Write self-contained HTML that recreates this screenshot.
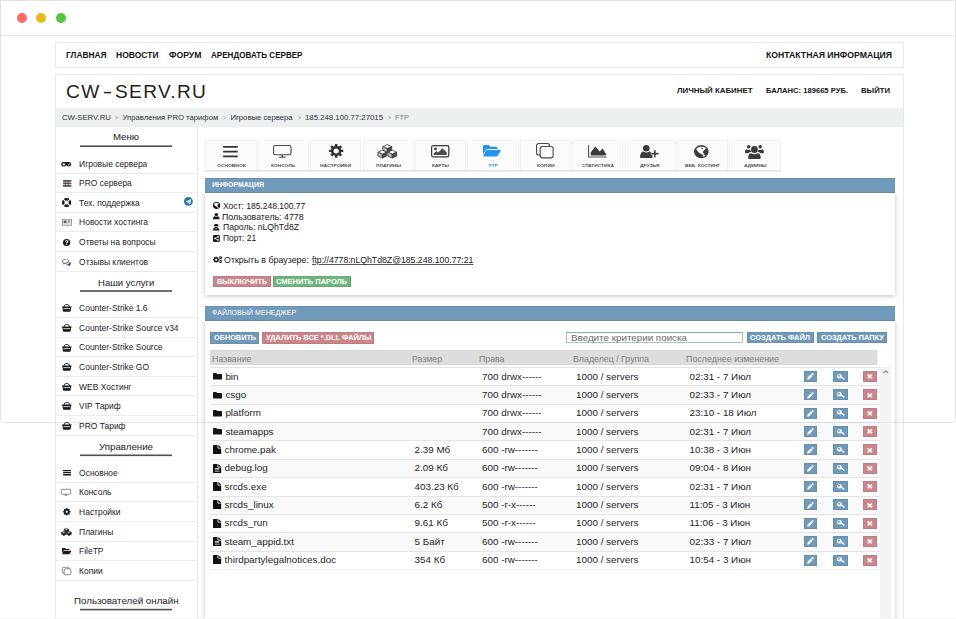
<!DOCTYPE html>
<html lang="ru">
<head>
<meta charset="utf-8">
<title>CW-SERV.RU — FTP</title>
<style>
*{box-sizing:border-box;margin:0;padding:0}
html,body{width:956px;height:619px;overflow:hidden;background:#fff}
body{position:relative;font-family:"Liberation Sans",sans-serif;color:#222}
.t{position:absolute;white-space:pre;transform-origin:0 0;display:block}
.r{position:absolute}
.ic{position:absolute;display:block;overflow:visible}
a.t{text-decoration:underline}
</style>
</head>
<body>
<div class="r" style="left:0.00px;top:0.00px;width:956.00px;height:423.00px;background:#fff;border:1px solid #e3e3e3;border-radius:0 0 3.5px 3.5px;"></div>
<div class="r" style="left:1.00px;top:35.00px;width:954.00px;height:1.00px;background:#e4e4e4;"></div>
<div class="r" style="left:17.00px;top:13.00px;width:10.00px;height:10.00px;background:#ff6b6b;border-radius:50%;"></div>
<div class="r" style="left:36.00px;top:13.00px;width:10.00px;height:10.00px;background:#ebb81c;border-radius:50%;"></div>
<div class="r" style="left:56.00px;top:13.00px;width:10.00px;height:10.00px;background:#55c63f;border-radius:50%;"></div>
<div class="r" style="left:55.00px;top:36.00px;width:849.00px;height:583.00px;background:#fff;"></div>
<nav>
<div class="r" style="left:55.00px;top:42.00px;width:849.00px;height:26.00px;background:#fff;border:1px solid #e9e9e9;"></div>
<span class="t" style="left:66.00px;top:49.80px;font-size:8.3px;line-height:10px;color:#141414;font-weight:bold;transform:scaleX(1.0062);">ГЛАВНАЯ</span>
<span class="t" style="left:116.00px;top:49.80px;font-size:8.3px;line-height:10px;color:#141414;font-weight:bold;transform:scaleX(1.0237);">НОВОСТИ</span>
<span class="t" style="left:168.50px;top:49.80px;font-size:8.3px;line-height:10px;color:#141414;font-weight:bold;transform:scaleX(1.0468);">ФОРУМ</span>
<span class="t" style="left:210.50px;top:49.80px;font-size:8.3px;line-height:10px;color:#141414;font-weight:bold;transform:scaleX(0.9731);">АРЕНДОВАТЬ СЕРВЕР</span>
<span class="t" style="left:765.50px;top:49.80px;font-size:8.3px;line-height:10px;color:#141414;font-weight:bold;transform:scaleX(1.0461);">КОНТАКТНАЯ ИНФОРМАЦИЯ</span>
</nav>
<header>
<div class="r" style="left:55.00px;top:74.00px;width:849.00px;height:560.00px;background:#fff;border:1px solid #e9e9e9;"></div>
<div class="t" id="logo" style="left:66.3px;top:81.2px;font-size:18px;line-height:22px;color:#222;letter-spacing:1.25px;transform:scaleX(1.062)">CW<span style="display:inline-block;font-size:15px;letter-spacing:0;transform:translateY(-1.1px) scaleX(.9);margin:0 2.9px 0 2.4px;font-weight:bold">–</span>SERV.RU</div>
<span class="t" style="left:676.50px;top:86.30px;font-size:7.4px;line-height:9px;color:#141414;font-weight:bold;transform:scaleX(1.0650);">ЛИЧНЫЙ КАБИНЕТ</span>
<span class="t" style="left:765.50px;top:86.30px;font-size:7.4px;line-height:9px;color:#141414;font-weight:bold;transform:scaleX(1.0290);">БАЛАНС: 189665 РУБ.</span>
<span class="t" style="left:861.00px;top:86.30px;font-size:7.4px;line-height:9px;color:#141414;font-weight:bold;transform:scaleX(1.0462);">ВЫЙТИ</span>
<div class="r" style="left:56.00px;top:108.00px;width:847.00px;height:19.00px;background:#ecf0f1;"></div>
<span class="t" style="left:62.00px;top:113.10px;font-size:7.7px;line-height:9px;color:#2c3034;transform:scaleX(1.0049);">CW-SERV.RU</span>
<span class="t" style="left:115.00px;top:113.60px;font-size:6.5px;line-height:8px;color:#8a8f94;transform:scaleX(0.7901);">&gt;</span>
<span class="t" style="left:122.50px;top:113.10px;font-size:7.7px;line-height:9px;color:#2c3034;">Управления PRO тарифом</span>
<span class="t" style="left:223.00px;top:113.60px;font-size:6.5px;line-height:8px;color:#8a8f94;transform:scaleX(0.7901);">&gt;</span>
<span class="t" style="left:230.50px;top:113.10px;font-size:7.7px;line-height:9px;color:#2c3034;">Игровые сервера</span>
<span class="t" style="left:298.00px;top:113.60px;font-size:6.5px;line-height:8px;color:#8a8f94;transform:scaleX(0.7901);">&gt;</span>
<span class="t" style="left:304.50px;top:113.10px;font-size:7.7px;line-height:9px;color:#2c3034;transform:scaleX(1.0136);">185.248.100.77:27015</span>
<span class="t" style="left:388.00px;top:113.60px;font-size:6.5px;line-height:8px;color:#8a8f94;transform:scaleX(0.7901);">&gt;</span>
<span class="t" style="left:394.50px;top:113.10px;font-size:7.7px;line-height:9px;color:#7b8085;transform:scaleX(0.9634);">FTP</span>
</header>
<aside>
<div class="r" style="left:197.00px;top:127.00px;width:1.00px;height:492.00px;background:#e6e9ec;"></div>
<span class="t" style="left:113.00px;top:132.40px;font-size:9.2px;line-height:11px;color:#222;transform:scaleX(1.0465);">Меню</span>
<div class="r" style="left:80.00px;top:145.00px;width:92.30px;height:2.00px;background:linear-gradient(rgba(78,78,78,0.60) 0.00% 50.00%,rgba(78,78,78,1.00) 50.00% 100.00%);"></div>
<svg class="ic" style="left:61.20px;top:161.80px;width:10.40px;height:4.60px;color:#1a1a1a;" viewBox="0 0 16 8" preserveAspectRatio="none" fill="currentColor"><path fill-rule="evenodd" d="M4.300 0h7.400a4 4 0 0 1 0 8c-1.400 0-2.600-.7-3.300-1.700h-.800A4 4 0 0 1 4.300 8a4 4 0 0 1 0-8zM4.300 2a2 2 0 1 0 0 4 2 2 0 0 0 0-4z"/><path fill="#fff" d="M10.300 5.700l2.900-3.600.9.700-2.900 3.600z" opacity=".9"/></svg>
<span class="t" style="left:79.10px;top:158.80px;font-size:8.45px;line-height:10px;color:#25232b;">Игровые сервера</span>
<div class="r" style="left:56.00px;top:172.80px;width:141.00px;height:1.00px;background:#e8ecef;"></div>
<svg class="ic" style="left:62.70px;top:180.14px;width:8.40px;height:6.80px;color:#33303a;" viewBox="0 0 14 12" preserveAspectRatio="none" fill="currentColor"><path d="M0 0h14v3.200H0zM0 4.400h14v3.200H0zM0 8.800h14V12H0z" opacity=".8"/><path d="M3.400 0h1.300v12H3.400zM8 0h1.300v12H8z" opacity=".75"/></svg>
<span class="t" style="left:79.10px;top:178.34px;font-size:8.45px;line-height:10px;color:#25232b;">PRO сервера</span>
<div class="r" style="left:56.00px;top:192.34px;width:141.00px;height:1.00px;background:#e8ecef;"></div>
<svg class="ic" style="left:62.00px;top:198.48px;width:9.20px;height:9.00px;color:#1a1a1a;" viewBox="0 0 14 14" preserveAspectRatio="none" fill="currentColor"><path fill-rule="evenodd" d="M7 0a7 7 0 1 1 0 14A7 7 0 0 1 7 0zm0 3.700a3.300 3.300 0 1 0 0 6.600 3.300 3.300 0 0 0 0-6.600z"/><path fill="#fff" d="M2.300 1.100l3 3-1.200 1.200-3-3zM11.700 1.100l1.200 1.200-3 3-1.200-1.200zM4.100 8.700l1.200 1.200-3 3-1.200-1.200zM9.900 8.700l3 3-1.200 1.200-3-3z"/></svg>
<span class="t" style="left:79.10px;top:197.88px;font-size:8.45px;line-height:10px;color:#25232b;">Тех. поддержка</span>
<div class="r" style="left:56.00px;top:211.88px;width:141.00px;height:1.00px;background:#e8ecef;"></div>
<svg class="ic" style="left:61.95px;top:219.22px;width:9.90px;height:6.80px;color:#1a1a1a;" viewBox="0 0 16 11" preserveAspectRatio="none" fill="currentColor"><path fill-rule="evenodd" d="M0 0h16v9.500A1.500 1.500 0 0 1 14.500 11h-13A1.500 1.500 0 0 1 0 9.500zm1 1v8.500a.5.500 0 0 0 .5.500h13a.5.500 0 0 0 .5-.5V1z" opacity=".7"/><path d="M2.500 2.500h5v4h-5zM9 2.500h4.500v1H9zM9 4.500h4.500v1H9zM2.500 7.500h11v1h-11z" opacity=".7"/></svg>
<span class="t" style="left:79.10px;top:217.42px;font-size:8.45px;line-height:10px;color:#25232b;">Новости хостинга</span>
<div class="r" style="left:56.00px;top:231.42px;width:141.00px;height:1.00px;background:#e8ecef;"></div>
<svg class="ic" style="left:63.40px;top:238.66px;width:7.20px;height:7.00px;color:#1a1a1a;" viewBox="0 0 14 14" preserveAspectRatio="none" fill="currentColor"><path fill-rule="evenodd" d="M7 0a7 7 0 1 1 0 14A7 7 0 0 1 7 0zM5.900 9.800v1.900h2.100V9.800zM7.100 2.300c-1.700 0-2.800.8-3.300 2.200l1.700.9c.3-.7.700-1.200 1.500-1.200.7 0 1.100.4 1.100.9 0 .6-.4.900-1 1.400-.8.600-1.200 1.200-1.200 2.300h2c0-.7.300-1 1-1.500.8-.6 1.400-1.300 1.400-2.400 0-1.600-1.300-2.600-3.200-2.600z"/></svg>
<span class="t" style="left:79.10px;top:236.96px;font-size:8.45px;line-height:10px;color:#25232b;">Ответы на вопросы</span>
<div class="r" style="left:56.00px;top:250.96px;width:141.00px;height:1.00px;background:#e8ecef;"></div>
<svg class="ic" style="left:62.40px;top:258.50px;width:9.00px;height:6.80px;color:#222;" viewBox="0 0 16 13" preserveAspectRatio="none" fill="currentColor"><path fill-rule="evenodd" d="M6.200 0c3.400 0 6.200 2 6.200 4.500S9.600 9 6.200 9c-.5 0-1 0-1.500-.1-.8.700-1.900 1.100-3 1.200.5-.5.900-1.200 1-2C1.100 7.300 0 6 0 4.500 0 2 2.800 0 6.200 0zm0 1.200c-2.800 0-5 1.500-5 3.300 0 1.100.8 2.100 2.200 2.700l.7.300-.1.600c.4-.2.700-.5 1-.8l.4-.4.600.1h.2c2.800 0 5-1.500 5-3.300s-2.200-3.300-5-3.300z" opacity=".8"/><path d="M13.400 5.500C15 6.300 16 7.500 16 8.800c0 1.200-.8 2.300-2.200 3 .1.600.4 1.100.8 1.500-1-.1-1.900-.5-2.600-1.100-2 .3-4-.3-5.200-1.400 3.300-.1 6.200-2 6.600-5.300z" opacity=".8"/></svg>
<span class="t" style="left:79.10px;top:256.50px;font-size:8.45px;line-height:10px;color:#25232b;">Отзывы клиентов</span>
<div class="r" style="left:56.00px;top:270.50px;width:141.00px;height:1.00px;background:#e8ecef;"></div>
<svg class="ic" style="left:184.10px;top:197.40px;width:8.80px;height:8.80px;color:#2871ad;" viewBox="0 0 14 14" preserveAspectRatio="none" fill="currentColor"><circle cx="7" cy="7" r="7"/><path fill="#fff" d="M2.800 6.900l8-3.200c.4-.1.700.1.600.6l-1.400 6.400c-.1.500-.4.600-.8.400L7.100 9.500l-1 1c-.1.100-.2.200-.4.200l.2-2.200 4-3.600c.2-.2 0-.2-.2-.1L4.700 7.900l-2-.6c-.4-.1-.4-.3.100-.4z"/></svg>
<span class="t" style="left:97.90px;top:277.60px;font-size:9.2px;line-height:11px;color:#222;transform:scaleX(1.0363);">Наши услуги</span>
<div class="r" style="left:80.00px;top:290.00px;width:92.30px;height:2.00px;background:linear-gradient(rgba(78,78,78,0.80) 0.00% 50.00%,rgba(78,78,78,0.80) 50.00% 100.00%);"></div>
<svg class="ic" style="left:61.80px;top:304.40px;width:9.60px;height:7.80px;color:#1a1a1a;" viewBox="0 0 16 13" preserveAspectRatio="none" fill="currentColor"><path fill-rule="evenodd" d="M8 0c2.500 0 4.600 1.800 5.300 4.300H16v1.600h-.7l-.9 5.800A1.500 1.500 0 0 1 12.900 13H3.100a1.500 1.500 0 0 1-1.500-1.300L.7 5.900H0V4.300h2.700C3.400 1.800 5.500 0 8 0zm0 1.400c-1.700 0-3.200 1.200-3.800 2.900h7.600C11.200 2.600 9.700 1.400 8 1.400z"/><path fill="#fff" d="M2.500 7.200h11v1.300h-11z"/></svg>
<span class="t" style="left:79.10px;top:303.30px;font-size:8.45px;line-height:10px;color:#25232b;">Counter-Strike 1.6</span>
<div class="r" style="left:56.00px;top:317.10px;width:141.00px;height:1.00px;background:#e8ecef;"></div>
<svg class="ic" style="left:61.80px;top:323.98px;width:9.60px;height:7.80px;color:#1a1a1a;" viewBox="0 0 16 13" preserveAspectRatio="none" fill="currentColor"><path fill-rule="evenodd" d="M8 0c2.500 0 4.600 1.800 5.300 4.300H16v1.600h-.7l-.9 5.800A1.500 1.500 0 0 1 12.900 13H3.100a1.500 1.500 0 0 1-1.500-1.300L.7 5.900H0V4.300h2.700C3.400 1.800 5.500 0 8 0zm0 1.400c-1.700 0-3.200 1.200-3.800 2.900h7.600C11.200 2.600 9.700 1.400 8 1.400z"/><path fill="#fff" d="M2.500 7.200h11v1.300h-11z"/></svg>
<span class="t" style="left:79.10px;top:322.88px;font-size:8.45px;line-height:10px;color:#25232b;">Counter-Strike Source v34</span>
<div class="r" style="left:56.00px;top:336.68px;width:141.00px;height:1.00px;background:#e8ecef;"></div>
<svg class="ic" style="left:61.80px;top:343.56px;width:9.60px;height:7.80px;color:#1a1a1a;" viewBox="0 0 16 13" preserveAspectRatio="none" fill="currentColor"><path fill-rule="evenodd" d="M8 0c2.500 0 4.600 1.800 5.300 4.300H16v1.600h-.7l-.9 5.800A1.500 1.500 0 0 1 12.900 13H3.100a1.500 1.500 0 0 1-1.500-1.300L.7 5.900H0V4.300h2.700C3.400 1.800 5.500 0 8 0zm0 1.400c-1.700 0-3.200 1.200-3.800 2.900h7.600C11.200 2.600 9.700 1.400 8 1.400z"/><path fill="#fff" d="M2.500 7.200h11v1.300h-11z"/></svg>
<span class="t" style="left:79.10px;top:342.46px;font-size:8.45px;line-height:10px;color:#25232b;">Counter-Strike Source</span>
<div class="r" style="left:56.00px;top:356.26px;width:141.00px;height:1.00px;background:#e8ecef;"></div>
<svg class="ic" style="left:61.80px;top:363.14px;width:9.60px;height:7.80px;color:#1a1a1a;" viewBox="0 0 16 13" preserveAspectRatio="none" fill="currentColor"><path fill-rule="evenodd" d="M8 0c2.500 0 4.600 1.800 5.300 4.300H16v1.600h-.7l-.9 5.800A1.500 1.500 0 0 1 12.900 13H3.100a1.500 1.500 0 0 1-1.500-1.300L.7 5.900H0V4.300h2.700C3.400 1.800 5.500 0 8 0zm0 1.400c-1.700 0-3.200 1.200-3.800 2.900h7.600C11.200 2.600 9.700 1.400 8 1.400z"/><path fill="#fff" d="M2.500 7.200h11v1.300h-11z"/></svg>
<span class="t" style="left:79.10px;top:362.04px;font-size:8.45px;line-height:10px;color:#25232b;">Counter-Strike GO</span>
<div class="r" style="left:56.00px;top:375.84px;width:141.00px;height:1.00px;background:#e8ecef;"></div>
<svg class="ic" style="left:61.80px;top:382.72px;width:9.60px;height:7.80px;color:#1a1a1a;" viewBox="0 0 16 13" preserveAspectRatio="none" fill="currentColor"><path fill-rule="evenodd" d="M8 0c2.500 0 4.600 1.800 5.300 4.300H16v1.600h-.7l-.9 5.800A1.500 1.500 0 0 1 12.900 13H3.100a1.500 1.500 0 0 1-1.500-1.300L.7 5.900H0V4.300h2.700C3.400 1.800 5.500 0 8 0zm0 1.400c-1.700 0-3.200 1.200-3.800 2.900h7.600C11.200 2.600 9.700 1.400 8 1.400z"/><path fill="#fff" d="M2.500 7.200h11v1.300h-11z"/></svg>
<span class="t" style="left:79.10px;top:381.62px;font-size:8.45px;line-height:10px;color:#25232b;">WEB Хостинг</span>
<div class="r" style="left:56.00px;top:395.42px;width:141.00px;height:1.00px;background:#e8ecef;"></div>
<svg class="ic" style="left:61.80px;top:402.30px;width:9.60px;height:7.80px;color:#1a1a1a;" viewBox="0 0 16 13" preserveAspectRatio="none" fill="currentColor"><path fill-rule="evenodd" d="M8 0c2.500 0 4.600 1.800 5.300 4.300H16v1.600h-.7l-.9 5.800A1.500 1.500 0 0 1 12.900 13H3.100a1.500 1.500 0 0 1-1.500-1.300L.7 5.900H0V4.300h2.700C3.400 1.800 5.500 0 8 0zm0 1.400c-1.700 0-3.200 1.200-3.800 2.900h7.600C11.200 2.600 9.700 1.400 8 1.400z"/><path fill="#fff" d="M2.500 7.200h11v1.300h-11z"/></svg>
<span class="t" style="left:79.10px;top:401.20px;font-size:8.45px;line-height:10px;color:#25232b;">VIP Тариф</span>
<div class="r" style="left:56.00px;top:415.00px;width:141.00px;height:1.00px;background:#e8ecef;"></div>
<svg class="ic" style="left:61.80px;top:421.88px;width:9.60px;height:7.80px;color:#1a1a1a;" viewBox="0 0 16 13" preserveAspectRatio="none" fill="currentColor"><path fill-rule="evenodd" d="M8 0c2.500 0 4.600 1.800 5.300 4.300H16v1.600h-.7l-.9 5.800A1.500 1.500 0 0 1 12.900 13H3.100a1.500 1.500 0 0 1-1.500-1.300L.7 5.900H0V4.300h2.700C3.400 1.800 5.500 0 8 0zm0 1.400c-1.700 0-3.200 1.200-3.800 2.900h7.600C11.200 2.600 9.700 1.400 8 1.400z"/><path fill="#fff" d="M2.500 7.200h11v1.300h-11z"/></svg>
<span class="t" style="left:79.10px;top:420.78px;font-size:8.45px;line-height:10px;color:#25232b;">PRO Тариф</span>
<div class="r" style="left:56.00px;top:434.58px;width:141.00px;height:1.00px;background:#e8ecef;"></div>
<span class="t" style="left:99.00px;top:441.90px;font-size:9.2px;line-height:11px;color:#222;transform:scaleX(1.0572);">Управление</span>
<div class="r" style="left:80.00px;top:454.00px;width:92.30px;height:3.00px;background:linear-gradient(rgba(78,78,78,0.50) 0.00% 33.33%,rgba(78,78,78,1.00) 33.33% 66.67%,rgba(78,78,78,0.10) 66.67% 100.00%);"></div>
<svg class="ic" style="left:62.80px;top:470.20px;width:8.00px;height:5.40px;color:#1a1a1a;" viewBox="0 0 16 11" preserveAspectRatio="none" fill="currentColor"><rect x="0" y="0" width="16" height="2.700" rx=".5"/><rect x="0" y="4.150" width="16" height="2.700" rx=".5"/><rect x="0" y="8.300" width="16" height="2.700" rx=".5"/></svg>
<span class="t" style="left:79.10px;top:467.80px;font-size:8.45px;line-height:10px;color:#25232b;">Основное</span>
<div class="r" style="left:56.00px;top:481.80px;width:141.00px;height:1.00px;background:#e8ecef;"></div>
<svg class="ic" style="left:61.40px;top:489.02px;width:10.00px;height:7.00px;color:#333;" viewBox="0 0 19 13.5" preserveAspectRatio="none" fill="currentColor"><rect x=".55" y=".55" width="17.9" height="9.5" rx="1.7" fill="none" stroke="currentColor" stroke-width="1.1"/><path d="M8.700 10.400h1.600v1.900h2.700v.9H6v-.9h2.700z"/></svg>
<span class="t" style="left:79.10px;top:487.42px;font-size:8.45px;line-height:10px;color:#25232b;">Консоль</span>
<div class="r" style="left:56.00px;top:501.42px;width:141.00px;height:1.00px;background:#e8ecef;"></div>
<svg class="ic" style="left:63.10px;top:508.34px;width:7.60px;height:7.60px;color:#1a1a1a;" viewBox="0 0 16 16" preserveAspectRatio="none" fill="currentColor"><path fill-rule="evenodd" d="M6.55 1.97 L6.62 0.12 L9.38 0.12 L9.45 1.97 L11.24 2.71 L12.60 1.45 L14.55 3.40 L13.29 4.76 L14.03 6.55 L15.88 6.62 L15.88 9.38 L14.03 9.45 L13.29 11.24 L14.55 12.60 L12.60 14.55 L11.24 13.29 L9.45 14.03 L9.38 15.88 L6.62 15.88 L6.55 14.03 L4.76 13.29 L3.40 14.55 L1.45 12.60 L2.71 11.24 L1.97 9.45 L0.12 9.38 L0.12 6.62 L1.97 6.55 L2.71 4.76 L1.45 3.40 L3.40 1.45 L4.76 2.71Z M5.70 8.00 a2.30 2.30 0 1 0 4.60 0 a2.30 2.30 0 1 0 -4.60 0Z"/></svg>
<span class="t" style="left:79.10px;top:507.04px;font-size:8.45px;line-height:10px;color:#25232b;">Настройки</span>
<div class="r" style="left:56.00px;top:521.04px;width:141.00px;height:1.00px;background:#e8ecef;"></div>
<svg class="ic" style="left:61.20px;top:527.81px;width:10.80px;height:7.90px;color:#1a1a1a;" viewBox="0 0 20 16" preserveAspectRatio="none" fill="currentColor"><path d="M10 0.6 l4.3 2.15 l-4.3 2.15 l-4.3 -2.15Z" fill="#ddd" stroke="currentColor" stroke-width="1.1" stroke-linejoin="round"/><path d="M5.7 2.75 l4.3 2.15 v4.085 l-4.3 -2.15Z" fill="#555" stroke="currentColor" stroke-width="1.1" stroke-linejoin="round"/><path d="M14.3 2.75 l-4.3 2.15 v4.085 l4.3 -2.15Z" fill="currentColor" stroke="currentColor" stroke-width="1.1" stroke-linejoin="round"/><path d="M5.2 6.6 l4.3 2.15 l-4.3 2.15 l-4.3 -2.15Z" fill="#ddd" stroke="currentColor" stroke-width="1.1" stroke-linejoin="round"/><path d="M0.9000000000000004 8.75 l4.3 2.15 v4.085 l-4.3 -2.15Z" fill="#555" stroke="currentColor" stroke-width="1.1" stroke-linejoin="round"/><path d="M9.5 8.75 l-4.3 2.15 v4.085 l4.3 -2.15Z" fill="currentColor" stroke="currentColor" stroke-width="1.1" stroke-linejoin="round"/><path d="M14.8 6.6 l4.3 2.15 l-4.3 2.15 l-4.3 -2.15Z" fill="#ddd" stroke="currentColor" stroke-width="1.1" stroke-linejoin="round"/><path d="M10.5 8.75 l4.3 2.15 v4.085 l-4.3 -2.15Z" fill="#555" stroke="currentColor" stroke-width="1.1" stroke-linejoin="round"/><path d="M19.1 8.75 l-4.3 2.15 v4.085 l4.3 -2.15Z" fill="currentColor" stroke="currentColor" stroke-width="1.1" stroke-linejoin="round"/></svg>
<span class="t" style="left:79.10px;top:526.66px;font-size:8.45px;line-height:10px;color:#25232b;">Плагины</span>
<div class="r" style="left:56.00px;top:540.66px;width:141.00px;height:1.00px;background:#e8ecef;"></div>
<svg class="ic" style="left:61.90px;top:548.28px;width:9.40px;height:6.20px;color:#1a1a1a;" viewBox="0 0 19 14" preserveAspectRatio="none" fill="currentColor"><path d="M0 1.600A1.600 1.600 0 0 1 1.600 0h4.200a1.600 1.600 0 0 1 1.600 1.600v.4h6.400a1.600 1.600 0 0 1 1.600 1.600v1.200H5.200a2.600 2.600 0 0 0-2.200 1.300L0 11.500z"/><path d="M4.400 6h13.900c.8 0 .9.500.5 1.100l-3 5.600c-.4.700-1 1.300-2.100 1.300H.9c-.7 0-.8-.5-.4-1.100l2.300-5.700C3.200 6.500 3.600 6 4.400 6z"/></svg>
<span class="t" style="left:79.10px;top:546.28px;font-size:8.45px;line-height:10px;color:#25232b;">FileTP</span>
<div class="r" style="left:56.00px;top:560.28px;width:141.00px;height:1.00px;background:#e8ecef;"></div>
<svg class="ic" style="left:62.40px;top:567.00px;width:9.20px;height:8.00px;color:#3a3a3a;" viewBox="0 0 17.7 15.4" preserveAspectRatio="none" fill="currentColor"><rect x=".55" y=".55" width="13" height="11.4" rx="2.3" fill="none" stroke="currentColor" stroke-width="1.1"/><rect x="4.15" y="3.45" width="13" height="11.4" rx="2.3" fill="#fcfcfc" stroke="currentColor" stroke-width="1.1"/></svg>
<span class="t" style="left:79.10px;top:565.90px;font-size:8.45px;line-height:10px;color:#25232b;">Копии</span>
<div class="r" style="left:56.00px;top:579.90px;width:141.00px;height:1.00px;background:#e8ecef;"></div>
<span class="t" style="left:74.00px;top:596.10px;font-size:9.2px;line-height:11px;color:#222;transform:scaleX(1.0619);">Пользователей онлайн</span>
<div class="r" style="left:80.00px;top:608.00px;width:92.30px;height:3.00px;background:linear-gradient(rgba(78,78,78,0.20) 0.00% 33.33%,rgba(78,78,78,1.00) 33.33% 66.67%,rgba(78,78,78,0.40) 66.67% 100.00%);"></div>
</aside>
<main>
<div class="r" style="left:205.40px;top:140.00px;width:51.20px;height:29.60px;background:#fbfbfb;border:1px solid #f1f1f1;border-bottom:0;"></div>
<svg class="ic" style="left:223.35px;top:145.60px;width:14.80px;height:11.20px;color:#333;" viewBox="0 0 16 12" preserveAspectRatio="none" fill="currentColor"><rect x="0" y="0" width="16" height="1.8" rx=".4"/><rect x="0" y="5.1" width="16" height="1.8" rx=".4"/><rect x="0" y="10.2" width="16" height="1.8" rx=".4"/></svg>
<span class="t" style="left:216.50px;top:162.70px;font-size:8.6px;line-height:10px;color:#505050;font-weight:bold;transform:scale(0.5728,0.5);">ОСНОВНОЕ</span>
<div class="r" style="left:257.80px;top:140.00px;width:51.20px;height:29.60px;background:#fbfbfb;border:1px solid #f1f1f1;border-bottom:0;"></div>
<svg class="ic" style="left:273.25px;top:144.65px;width:18.60px;height:13.00px;color:#4a4a4a;" viewBox="0 0 19 13.5" preserveAspectRatio="none" fill="currentColor"><rect x=".55" y=".55" width="17.9" height="9.5" rx="1.7" fill="none" stroke="currentColor" stroke-width="1.1"/><path d="M8.700 10.400h1.600v1.900h2.700v.9H6v-.9h2.700z"/></svg>
<span class="t" style="left:271.40px;top:162.70px;font-size:8.6px;line-height:10px;color:#505050;font-weight:bold;transform:scale(0.5606,0.5);">КОНСОЛЬ</span>
<div class="r" style="left:310.20px;top:140.00px;width:51.20px;height:29.60px;background:#fbfbfb;border:1px solid #f1f1f1;border-bottom:0;"></div>
<svg class="ic" style="left:328.60px;top:144.30px;width:14.40px;height:13.80px;color:#333;" viewBox="0 0 16 16" preserveAspectRatio="none" fill="currentColor"><path fill-rule="evenodd" d="M6.62 2.26 L6.62 0.12 L9.38 0.12 L9.38 2.26 L11.08 2.97 L12.60 1.45 L14.55 3.40 L13.03 4.92 L13.74 6.62 L15.88 6.62 L15.88 9.38 L13.74 9.38 L13.03 11.08 L14.55 12.60 L12.60 14.55 L11.08 13.03 L9.38 13.74 L9.38 15.88 L6.62 15.88 L6.62 13.74 L4.92 13.03 L3.40 14.55 L1.45 12.60 L2.97 11.08 L2.26 9.38 L0.12 9.38 L0.12 6.62 L2.26 6.62 L2.97 4.92 L1.45 3.40 L3.40 1.45 L4.92 2.97Z M5.10 8.00 a2.90 2.90 0 1 0 5.80 0 a2.90 2.90 0 1 0 -5.80 0Z"/></svg>
<span class="t" style="left:320.30px;top:162.70px;font-size:8.6px;line-height:10px;color:#505050;font-weight:bold;transform:scale(0.5811,0.5);">НАСТРОЙКИ</span>
<div class="r" style="left:362.60px;top:140.00px;width:51.20px;height:29.60px;background:#fbfbfb;border:1px solid #f1f1f1;border-bottom:0;"></div>
<svg class="ic" style="left:377.10px;top:143.60px;width:20.60px;height:15.00px;color:#3a3a3a;" viewBox="0 0 20 16" preserveAspectRatio="none" fill="currentColor"><path d="M10 0.6 l4.3 2.15 l-4.3 2.15 l-4.3 -2.15Z" fill="#fff" stroke="currentColor" stroke-width=".8" stroke-linejoin="round"/><path d="M5.7 2.75 l4.3 2.15 v4.085 l-4.3 -2.15Z" fill="#bdbdbd" stroke="currentColor" stroke-width=".8" stroke-linejoin="round"/><path d="M14.3 2.75 l-4.3 2.15 v4.085 l4.3 -2.15Z" fill="#4a4a4a" stroke="currentColor" stroke-width=".8" stroke-linejoin="round"/><path d="M5.2 6.6 l4.3 2.15 l-4.3 2.15 l-4.3 -2.15Z" fill="#fff" stroke="currentColor" stroke-width=".8" stroke-linejoin="round"/><path d="M0.9000000000000004 8.75 l4.3 2.15 v4.085 l-4.3 -2.15Z" fill="#bdbdbd" stroke="currentColor" stroke-width=".8" stroke-linejoin="round"/><path d="M9.5 8.75 l-4.3 2.15 v4.085 l4.3 -2.15Z" fill="#4a4a4a" stroke="currentColor" stroke-width=".8" stroke-linejoin="round"/><path d="M14.8 6.6 l4.3 2.15 l-4.3 2.15 l-4.3 -2.15Z" fill="#fff" stroke="currentColor" stroke-width=".8" stroke-linejoin="round"/><path d="M10.5 8.75 l4.3 2.15 v4.085 l-4.3 -2.15Z" fill="#bdbdbd" stroke="currentColor" stroke-width=".8" stroke-linejoin="round"/><path d="M19.1 8.75 l-4.3 2.15 v4.085 l4.3 -2.15Z" fill="#4a4a4a" stroke="currentColor" stroke-width=".8" stroke-linejoin="round"/></svg>
<span class="t" style="left:375.70px;top:162.70px;font-size:8.6px;line-height:10px;color:#505050;font-weight:bold;transform:scale(0.5670,0.5);">ПЛАГИНЫ</span>
<div class="r" style="left:415.00px;top:140.00px;width:51.20px;height:29.60px;background:#fbfbfb;border:1px solid #f1f1f1;border-bottom:0;"></div>
<svg class="ic" style="left:431.25px;top:144.70px;width:18.40px;height:12.40px;color:#3a3a3a;" viewBox="0 0 18 12.4" preserveAspectRatio="none" fill="currentColor"><rect x=".6" y=".6" width="16.8" height="11.2" rx="1.6" fill="none" stroke="currentColor" stroke-width="1.2"/><circle cx="4.400" cy="3.900" r="1.350"/><path d="M2.600 9.900V8.600l2.700-2.700 1.600 1.600 4.300-4.300 4.200 4.200v2.500z" opacity=".9"/></svg>
<span class="t" style="left:432.10px;top:162.70px;font-size:8.6px;line-height:10px;color:#505050;font-weight:bold;transform:scale(0.5531,0.5);">КАРТЫ</span>
<div class="r" style="left:467.40px;top:140.00px;width:51.20px;height:29.60px;background:#fbfbfb;border:1px solid #f1f1f1;border-bottom:0;"></div>
<svg class="ic" style="left:483.45px;top:145.00px;width:17.80px;height:11.60px;color:#2392f2;" viewBox="0 0 19 14" preserveAspectRatio="none" fill="currentColor"><path d="M0 1.600A1.600 1.600 0 0 1 1.600 0h4.200a1.600 1.600 0 0 1 1.600 1.600v.4h6.400a1.600 1.600 0 0 1 1.600 1.600v1.200H5.200a2.600 2.600 0 0 0-2.200 1.300L0 11.500z"/><path d="M4.400 6h13.900c.8 0 .9.500.5 1.100l-3 5.600c-.4.700-1 1.300-2.100 1.300H.9c-.7 0-.8-.5-.4-1.100l2.300-5.700C3.200 6.500 3.600 6 4.400 6z"/></svg>
<span class="t" style="left:488.75px;top:162.70px;font-size:8.6px;line-height:10px;color:#2392f2;font-weight:bold;transform:scale(0.5236,0.5);">FTP</span>
<div class="r" style="left:519.80px;top:140.00px;width:51.20px;height:29.60px;background:#fbfbfb;border:1px solid #f1f1f1;border-bottom:0;"></div>
<svg class="ic" style="left:536.00px;top:143.10px;width:17.70px;height:15.40px;color:#4a4a4a;" viewBox="0 0 17.7 15.4" preserveAspectRatio="none" fill="currentColor"><rect x=".55" y=".55" width="13" height="11.4" rx="2.3" fill="none" stroke="currentColor" stroke-width="1.1"/><rect x="4.15" y="3.45" width="13" height="11.4" rx="2.3" fill="#fcfcfc" stroke="currentColor" stroke-width="1.1"/></svg>
<span class="t" style="left:536.65px;top:162.70px;font-size:8.6px;line-height:10px;color:#505050;font-weight:bold;transform:scale(0.5744,0.5);">КОПИИ</span>
<div class="r" style="left:572.20px;top:140.00px;width:51.20px;height:29.60px;background:#fbfbfb;border:1px solid #f1f1f1;border-bottom:0;"></div>
<svg class="ic" style="left:587.50px;top:144.70px;width:18.80px;height:12.60px;color:#3a3a3a;" viewBox="0 0 18.8 12.6" preserveAspectRatio="none" fill="currentColor"><path d="M0 0h1.100v11.500H18.800v1.100H0z" opacity=".85"/><path d="M2.700 10.400V7.400l4.700-5.800 4.300 5 3.100-3 3.100 5.400v1.400z"/></svg>
<span class="t" style="left:581.80px;top:162.70px;font-size:8.6px;line-height:10px;color:#505050;font-weight:bold;transform:scale(0.5636,0.5);">СТАТИСТИКА</span>
<div class="r" style="left:624.60px;top:140.00px;width:51.20px;height:29.60px;background:#fbfbfb;border:1px solid #f1f1f1;border-bottom:0;"></div>
<svg class="ic" style="left:640.00px;top:144.70px;width:18.90px;height:12.90px;color:#3a3a3a;" viewBox="0 0 19 13" preserveAspectRatio="none" fill="currentColor"><circle cx="6.300" cy="3.300" r="3.300"/><path d="M0 12.100c0-3.500 1.900-5.500 3.400-5.500.7.600 1.700 1 2.900 1s2.200-.4 2.900-1c1.500 0 3.400 2 3.400 5.500 0 .5-.4.900-1 .9H1c-.6 0-1-.4-1-.9z"/><path d="M13.900 5h2.100v2.700H19v2.100h-3v2.700h-2.100V9.800h-2.800V7.700h2.800z" stroke="#fbfbfb" stroke-width=".5"/></svg>
<span class="t" style="left:640.45px;top:162.70px;font-size:8.6px;line-height:10px;color:#505050;font-weight:bold;transform:scale(0.5652,0.5);">ДРУЗЬЯ</span>
<div class="r" style="left:677.00px;top:140.00px;width:51.20px;height:29.60px;background:#fbfbfb;border:1px solid #f1f1f1;border-bottom:0;"></div>
<svg class="ic" style="left:694.20px;top:144.70px;width:14.60px;height:13.20px;color:#3a3a3a;" viewBox="0 0 16 16" preserveAspectRatio="none" fill="currentColor"><circle cx="8" cy="8" r="8"/><path fill="#fff" transform="translate(0 .7)" d="M2.600 3.700C4.200 2 6.300 1.300 8.300 1.300c1.800 0 3.500.600 4.800 1.700-.5 1.400-1.500 2.200-2.500 3.200-.8.800-1.300 1.500-.9 2.300.300.600 1 .800 1.600 1l-.5 1.700c-1.800-.4-3.900-1.200-5.500-2.800C3.600 6.700 2.700 5.100 2.600 3.700z"/><circle cx="9.100" cy="4.100" r=".9"/><path fill="#fff" d="M9.400 12.700l2.300-1 1 1.100c-.8.800-1.800 1.300-2.800 1.600z"/></svg>
<span class="t" style="left:685.10px;top:162.70px;font-size:8.6px;line-height:10px;color:#505050;font-weight:bold;transform:scale(0.5504,0.5);">ВЕБ. ХОСТИНГ</span>
<div class="r" style="left:729.40px;top:140.00px;width:51.20px;height:29.60px;background:#fbfbfb;border:1px solid #f1f1f1;border-bottom:0;"></div>
<svg class="ic" style="left:744.80px;top:143.50px;width:18.90px;height:15.00px;color:#3a3a3a;" viewBox="0 0 19 15" preserveAspectRatio="none" fill="currentColor"><circle cx="9.500" cy="5.500" r="3.400"/><path d="M3.200 13.400c0-2.600 1.500-4.200 3-4.200.9.700 2 1.100 3.300 1.100s2.400-.4 3.300-1.100c1.500 0 3 1.600 3 4.200 0 1-.7 1.600-1.600 1.600H4.800c-.9 0-1.600-.6-1.600-1.600z"/><circle cx="3.700" cy="2.700" r="1.800"/><circle cx="15.300" cy="2.700" r="1.800"/><path d="M0 7.700c0-1.500.8-2.500 1.700-2.500.5.400 1.200.7 2 .7.600 0 1.100-.1 1.500-.4.200.9.700 1.700 1.300 2.300-1.300.1-2.400.7-3.200 1.500H1.200C.5 9.300 0 8.600 0 7.700zM19 7.700c0-1.500-.8-2.500-1.700-2.500-.5.400-1.200.7-2 .7-.6 0-1.100-.1-1.500-.4-.2.900-.7 1.700-1.300 2.300 1.300.1 2.400.7 3.200 1.500h2.100c.7 0 1.200-.7 1.200-1.600z"/></svg>
<span class="t" style="left:743.75px;top:162.70px;font-size:8.6px;line-height:10px;color:#505050;font-weight:bold;transform:scale(0.5541,0.5);">АДМИНЫ</span>
<div class="r" style="left:205.40px;top:169.60px;width:575.20px;height:2.00px;background:linear-gradient(#e4e4e4,#ececec);"></div>
<section>
<div class="r" style="left:205.00px;top:192.00px;width:690.00px;height:103.00px;background:#fff;box-shadow:0 1px 5px rgba(0,0,0,.24);"></div>
<div class="r" style="left:205.00px;top:178.00px;width:690.00px;height:14.60px;background:#7199ba;border-bottom:1px solid #6288aa;border-top:1px solid #6a91b2;"></div>
<span class="t" style="left:211.70px;top:180.80px;font-size:6.6px;line-height:8px;color:#fff;font-weight:bold;transform:scaleX(1.0565);">ИНФОРМАЦИЯ</span>
<svg class="ic" style="left:213.10px;top:202.45px;width:7.20px;height:6.90px;color:#1a1a1a;" viewBox="0 0 16 16" preserveAspectRatio="none" fill="currentColor"><circle cx="8" cy="8" r="8"/><path fill="#fff" transform="translate(0 .7)" d="M2.600 3.700C4.200 2 6.300 1.300 8.300 1.300c1.800 0 3.500.600 4.800 1.700-.5 1.400-1.500 2.200-2.500 3.200-.8.800-1.300 1.500-.9 2.300.300.600 1 .800 1.600 1l-.5 1.700c-1.800-.4-3.900-1.200-5.500-2.800C3.600 6.700 2.700 5.100 2.600 3.700z"/><circle cx="9.100" cy="4.100" r=".9"/><path fill="#fff" d="M9.400 12.700l2.300-1 1 1.100c-.8.800-1.800 1.300-2.800 1.600z"/></svg>
<span class="t" style="left:222.60px;top:200.90px;font-size:8.4px;line-height:10px;color:#161618;transform:scaleX(1.0155);">Хост: 185.248.100.77</span>
<svg class="ic" style="left:212.90px;top:213.25px;width:6.60px;height:6.30px;color:#1a1a1a;" viewBox="0 0 12 13" preserveAspectRatio="none" fill="currentColor"><circle cx="6" cy="3.200" r="3.200"/><path d="M0 12.200c0-3.600 1.700-5.500 3.200-5.500.7.600 1.700.9 2.800.9s2.100-.3 2.800-.9c1.500 0 3.200 1.900 3.200 5.500 0 .5-.4.800-.9.800H.9c-.5 0-.9-.3-.9-.8z"/></svg>
<span class="t" style="left:222.40px;top:211.60px;font-size:8.4px;line-height:10px;color:#161618;transform:scaleX(1.0510);">Пользователь: 4778</span>
<svg class="ic" style="left:213.00px;top:223.75px;width:6.40px;height:6.50px;color:#1a1a1a;" viewBox="0 0 12 13" preserveAspectRatio="none" fill="currentColor"><path d="M3.200 0h5.600l.8 3.200 1.400.5v.9H1v-.9l1.400-.5z"/><path d="M2.800 5.400h6.400c0 1.800-1.400 3.200-3.200 3.200S2.800 7.200 2.800 5.400z"/><path d="M0 12.400c0-2.600 1.600-4.400 3-4.400l3 1.600L9 8c1.400 0 3 1.800 3 4.400 0 .4-.3.600-.8.600H.8c-.5 0-.8-.2-.8-.6z"/></svg>
<span class="t" style="left:222.80px;top:222.30px;font-size:8.4px;line-height:10px;color:#161618;transform:scaleX(1.0305);">Пароль: nLQhTd8Z</span>
<svg class="ic" style="left:213.05px;top:234.65px;width:6.90px;height:6.90px;color:#1a1a1a;" viewBox="0 0 12 12" preserveAspectRatio="none" fill="currentColor"><path fill-rule="evenodd" d="M2 0h8a2 2 0 0 1 2 2v8a2 2 0 0 1-2 2H2a2 2 0 0 1-2-2V2a2 2 0 0 1 2-2zm6.800 1.800a1.500 1.500 0 0 0-1.500 1.800L4.600 5a1.500 1.500 0 1 0 0 2.100l2.700 1.400a1.500 1.500 0 1 0 .5-.9L5.100 6.200v-.4l2.700-1.400a1.500 1.500 0 1 0 1-2.600z"/></svg>
<span class="t" style="left:222.80px;top:232.90px;font-size:8.4px;line-height:10px;color:#161618;transform:scaleX(1.0070);">Порт: 21</span>
<svg class="ic" style="left:213.40px;top:256.30px;width:9.20px;height:7.00px;color:#1a1a1a;" viewBox="0 0 17 13" preserveAspectRatio="none" fill="currentColor"><path fill-rule="evenodd" d="M4.73 2.33 L4.80 1.09 L6.80 1.09 L6.87 2.33 L8.20 2.88 L9.14 2.05 L10.55 3.46 L9.72 4.40 L10.27 5.73 L11.51 5.80 L11.51 7.80 L10.27 7.87 L9.72 9.20 L10.55 10.14 L9.14 11.55 L8.20 10.72 L6.87 11.27 L6.80 12.51 L4.80 12.51 L4.73 11.27 L3.40 10.72 L2.46 11.55 L1.05 10.14 L1.88 9.20 L1.33 7.87 L0.09 7.80 L0.09 5.80 L1.33 5.73 L1.88 4.40 L1.05 3.46 L2.46 2.05 L3.40 2.88Z M3.80 6.80 a2.00 2.00 0 1 0 4.00 0 a2.00 2.00 0 1 0 -4.00 0Z"/><path fill-rule="evenodd" d="M13.26 0.92 L13.31 0.28 L14.69 0.28 L14.74 0.92 L15.61 1.42 L16.19 1.15 L16.87 2.33 L16.35 2.70 L16.35 3.70 L16.87 4.07 L16.19 5.25 L15.61 4.98 L14.74 5.48 L14.69 6.12 L13.31 6.12 L13.26 5.48 L12.39 4.98 L11.81 5.25 L11.13 4.07 L11.65 3.70 L11.65 2.70 L11.13 2.33 L11.81 1.15 L12.39 1.42Z M13.10 3.20 a0.90 0.90 0 1 0 1.80 0 a0.90 0.90 0 1 0 -1.80 0Z"/><path fill-rule="evenodd" d="M13.29 8.01 L13.36 7.47 L14.64 7.47 L14.71 8.01 L15.54 8.49 L16.04 8.28 L16.68 9.39 L16.25 9.72 L16.25 10.68 L16.68 11.01 L16.04 12.12 L15.54 11.91 L14.71 12.39 L14.64 12.93 L13.36 12.93 L13.29 12.39 L12.46 11.91 L11.96 12.12 L11.32 11.01 L11.75 10.68 L11.75 9.72 L11.32 9.39 L11.96 8.28 L12.46 8.49Z M13.20 10.20 a0.80 0.80 0 1 0 1.60 0 a0.80 0.80 0 1 0 -1.60 0Z"/></svg>
<span class="t" style="left:224.40px;top:255.10px;font-size:8.4px;line-height:10px;color:#161618;transform:scaleX(1.0579);">Открыть в браузере:</span>
<a class="t" style="left:312.20px;top:255.10px;font-size:8.4px;line-height:10px;color:#161618;transform:scaleX(1.0369);text-decoration-thickness:0.6px;text-underline-offset:1px;text-decoration-color:rgba(0,0,0,.65);">ftp://4778:nLQhTd8Z@185.248.100.77:21</a>
<div class="r" style="left:213.30px;top:275.80px;width:57.30px;height:11.20px;background:#cc868b;box-shadow:inset 0 0 0 1px rgba(0,0,0,.07);"></div>
<span class="t" style="left:216.90px;top:277.50px;font-size:7px;line-height:8px;color:#fff;font-weight:bold;transform:scaleX(1.0593);">ВЫКЛЮЧИТЬ</span>
<div class="r" style="left:272.90px;top:275.80px;width:78.20px;height:11.20px;background:#70b580;box-shadow:inset 0 0 0 1px rgba(0,0,0,.07);"></div>
<span class="t" style="left:276.40px;top:277.50px;font-size:7px;line-height:8px;color:#fff;font-weight:bold;transform:scaleX(1.0677);">СМЕНИТЬ ПАРОЛЬ</span>
</section>
<section>
<div class="r" style="left:205.00px;top:320.00px;width:690.00px;height:310.00px;background:#fff;box-shadow:0 1px 5px rgba(0,0,0,.24);"></div>
<div class="r" style="left:205.00px;top:306.00px;width:690.00px;height:14.80px;background:#7199ba;border-bottom:1px solid #6288aa;border-top:1px solid #6a91b2;"></div>
<span class="t" style="left:212.00px;top:309.30px;font-size:7px;line-height:8px;color:#fff;transform:scaleX(1.0082);">ФАЙЛОВЫЙ МЕНЕДЖЕР</span>
<div class="r" style="left:210.10px;top:332.40px;width:48.90px;height:11.20px;background:#7199ba;box-shadow:inset 0 0 0 1px rgba(0,0,0,.07);"></div>
<span class="t" style="left:213.50px;top:334.10px;font-size:7px;line-height:8px;color:#fff;font-weight:bold;transform:scaleX(1.0427);">ОБНОВИТЬ</span>
<div class="r" style="left:262.20px;top:332.40px;width:112.30px;height:11.20px;background:#cc868b;box-shadow:inset 0 0 0 1px rgba(0,0,0,.07);"></div>
<span class="t" style="left:265.70px;top:334.10px;font-size:7px;line-height:8px;color:#fff;font-weight:bold;transform:scaleX(1.0580);">УДАЛИТЬ ВСЕ *.DLL ФАЙЛЫ</span>
<div class="r" style="left:566.00px;top:332.00px;width:176.60px;height:11.20px;background:#fff;border:1px solid #a9c0d4;border-top-color:#8fabc5;box-shadow:inset 0 1px 1px rgba(0,0,0,.06);"></div>
<span class="t" style="left:571.00px;top:331.70px;font-size:9.6px;line-height:12px;color:#6a6a6a;transform:scaleX(1.0227);">Введите критерии поиска</span>
<div class="r" style="left:746.50px;top:332.10px;width:67.10px;height:11.10px;background:#7199ba;box-shadow:inset 0 0 0 1px rgba(0,0,0,.07);"></div>
<span class="t" style="left:750.00px;top:333.75px;font-size:7px;line-height:8px;color:#fff;font-weight:bold;transform:scaleX(1.0625);">СОЗДАТЬ ФАЙЛ</span>
<div class="r" style="left:817.20px;top:332.10px;width:69.80px;height:11.10px;background:#7199ba;box-shadow:inset 0 0 0 1px rgba(0,0,0,.07);"></div>
<span class="t" style="left:820.70px;top:333.75px;font-size:7px;line-height:8px;color:#fff;font-weight:bold;transform:scaleX(1.0574);">СОЗДАТЬ ПАПКУ</span>
<div class="r" style="left:210.10px;top:350.00px;width:666.70px;height:15.00px;background:#dddddd;box-shadow:inset 0 0 0 1px rgba(0,0,0,.025);"></div>
<span class="t" style="left:212.10px;top:353.60px;font-size:8.4px;line-height:10px;color:#808080;transform:scaleX(1.0551);">Название</span>
<span class="t" style="left:411.50px;top:353.60px;font-size:8.4px;line-height:10px;color:#808080;transform:scaleX(1.0418);">Размер</span>
<span class="t" style="left:479.00px;top:353.60px;font-size:8.4px;line-height:10px;color:#808080;transform:scaleX(1.0468);">Права</span>
<span class="t" style="left:572.50px;top:353.60px;font-size:8.4px;line-height:10px;color:#808080;transform:scaleX(1.0517);">Владелец / Группа</span>
<span class="t" style="left:685.50px;top:353.60px;font-size:8.4px;line-height:10px;color:#808080;transform:scaleX(1.0621);">Последнее изменение</span>
<div class="r" style="left:880.30px;top:367.30px;width:10.70px;height:260.00px;background:#f3f3f3;"></div>
<svg class="ic" style="left:882.70px;top:370.00px;width:5.60px;height:3.60px;color:#8c8c8c;" viewBox="0 0 10 6.5" preserveAspectRatio="none" fill="currentColor"><path d="M5 0l5 4.800-1.700 1.700L5 3.300 1.700 6.500 0 4.800z"/></svg>
<div class="r" style="left:210.10px;top:367.13px;width:670.20px;height:18.34px;background:#fff;border-top:1px solid #e4e4e4;"></div>
<svg class="ic" style="left:213.30px;top:373.30px;width:9.00px;height:6.60px;color:#151515;" viewBox="0 0 14 10" preserveAspectRatio="none" fill="currentColor"><path d="M0 1.300A1.300 1.300 0 0 1 1.300 0h3.400A1.300 1.300 0 0 1 6 1.300v.3h6.700A1.300 1.300 0 0 1 14 2.900v5.800A1.300 1.300 0 0 1 12.700 10H1.300A1.300 1.300 0 0 1 0 8.700z"/></svg>
<span class="t" style="left:225.40px;top:370.60px;font-size:9.86px;line-height:12px;color:#242428;">bin</span>
<span class="t" style="left:482.00px;top:370.60px;font-size:9.86px;line-height:12px;color:#242428;">700 drwx------</span>
<span class="t" style="left:576.00px;top:370.60px;font-size:9.86px;line-height:12px;color:#242428;">1000 / servers</span>
<span class="t" style="left:689.50px;top:370.60px;font-size:9.86px;line-height:12px;color:#242428;">02:31 - 7 Июл</span>
<div class="r" style="left:803.90px;top:371.10px;width:13.30px;height:11.00px;background:#7199ba;box-shadow:inset 0 0 0 1px rgba(0,0,0,.07);"></div>
<svg class="ic" style="left:807.10px;top:373.30px;width:6.80px;height:6.80px;color:#fff;" viewBox="0 0 12 12" preserveAspectRatio="none" fill="currentColor"><path d="M8.700.5c.6-.6 1.500-.6 2.100 0l.7.7c.6.6.6 1.500 0 2.100l-.8.800-2.800-2.800zM7.100 2.100l2.800 2.800-6 6-3.600.8.800-3.600z"/></svg>
<div class="r" style="left:833.00px;top:371.10px;width:14.80px;height:11.00px;background:#7199ba;box-shadow:inset 0 0 0 1px rgba(0,0,0,.07);"></div>
<svg class="ic" style="left:836.80px;top:373.70px;width:7.40px;height:5.80px;color:#fff;" viewBox="0 0 14 12" preserveAspectRatio="none" fill="currentColor"><path fill-rule="evenodd" d="M4.600 0a4.600 4.600 0 0 1 4.500 5.600l4.900 3.900v2.300h-2.400v-1.500H10V8.800H8.300L7.400 8.100A4.600 4.600 0 1 1 4.600 0zM3.700 1.700a2 2 0 1 0 0 4 2 2 0 0 0 0-4z"/></svg>
<div class="r" style="left:863.20px;top:371.10px;width:13.60px;height:11.00px;background:#cc868b;box-shadow:inset 0 0 0 1px rgba(0,0,0,.07);"></div>
<svg class="ic" style="left:867.20px;top:374.40px;width:5.60px;height:4.80px;color:#fff;" viewBox="0 0 10 9" preserveAspectRatio="none" fill="currentColor"><path d="M2.400 0L5 2.300 7.600 0 10 2.100 7.400 4.500 10 6.900 7.600 9 5 6.700 2.400 9 0 6.900 2.600 4.500 0 2.100z"/></svg>
<div class="r" style="left:210.10px;top:385.47px;width:670.20px;height:18.34px;background:#f9f9f9;border-top:1px solid #e4e4e4;"></div>
<svg class="ic" style="left:213.30px;top:391.64px;width:9.00px;height:6.60px;color:#151515;" viewBox="0 0 14 10" preserveAspectRatio="none" fill="currentColor"><path d="M0 1.300A1.300 1.300 0 0 1 1.300 0h3.400A1.300 1.300 0 0 1 6 1.300v.3h6.700A1.300 1.300 0 0 1 14 2.900v5.800A1.300 1.300 0 0 1 12.700 10H1.300A1.300 1.300 0 0 1 0 8.700z"/></svg>
<span class="t" style="left:225.40px;top:388.94px;font-size:9.86px;line-height:12px;color:#242428;">csgo</span>
<span class="t" style="left:482.00px;top:388.94px;font-size:9.86px;line-height:12px;color:#242428;">700 drwx------</span>
<span class="t" style="left:576.00px;top:388.94px;font-size:9.86px;line-height:12px;color:#242428;">1000 / servers</span>
<span class="t" style="left:689.50px;top:388.94px;font-size:9.86px;line-height:12px;color:#242428;">02:33 - 7 Июл</span>
<div class="r" style="left:803.90px;top:389.44px;width:13.30px;height:11.00px;background:#7199ba;box-shadow:inset 0 0 0 1px rgba(0,0,0,.07);"></div>
<svg class="ic" style="left:807.10px;top:391.64px;width:6.80px;height:6.80px;color:#fff;" viewBox="0 0 12 12" preserveAspectRatio="none" fill="currentColor"><path d="M8.700.5c.6-.6 1.500-.6 2.100 0l.7.7c.6.6.6 1.500 0 2.100l-.8.800-2.800-2.800zM7.100 2.100l2.800 2.800-6 6-3.600.8.800-3.600z"/></svg>
<div class="r" style="left:833.00px;top:389.44px;width:14.80px;height:11.00px;background:#7199ba;box-shadow:inset 0 0 0 1px rgba(0,0,0,.07);"></div>
<svg class="ic" style="left:836.80px;top:392.04px;width:7.40px;height:5.80px;color:#fff;" viewBox="0 0 14 12" preserveAspectRatio="none" fill="currentColor"><path fill-rule="evenodd" d="M4.600 0a4.600 4.600 0 0 1 4.500 5.600l4.900 3.900v2.300h-2.400v-1.500H10V8.800H8.300L7.400 8.100A4.600 4.600 0 1 1 4.600 0zM3.700 1.700a2 2 0 1 0 0 4 2 2 0 0 0 0-4z"/></svg>
<div class="r" style="left:863.20px;top:389.44px;width:13.60px;height:11.00px;background:#cc868b;box-shadow:inset 0 0 0 1px rgba(0,0,0,.07);"></div>
<svg class="ic" style="left:867.20px;top:392.74px;width:5.60px;height:4.80px;color:#fff;" viewBox="0 0 10 9" preserveAspectRatio="none" fill="currentColor"><path d="M2.400 0L5 2.300 7.600 0 10 2.100 7.400 4.500 10 6.900 7.600 9 5 6.700 2.400 9 0 6.900 2.600 4.500 0 2.100z"/></svg>
<div class="r" style="left:210.10px;top:403.81px;width:670.20px;height:18.34px;background:#fff;border-top:1px solid #e4e4e4;"></div>
<svg class="ic" style="left:213.30px;top:409.98px;width:9.00px;height:6.60px;color:#151515;" viewBox="0 0 14 10" preserveAspectRatio="none" fill="currentColor"><path d="M0 1.300A1.300 1.300 0 0 1 1.300 0h3.400A1.300 1.300 0 0 1 6 1.300v.3h6.700A1.300 1.300 0 0 1 14 2.900v5.800A1.300 1.300 0 0 1 12.700 10H1.300A1.300 1.300 0 0 1 0 8.700z"/></svg>
<span class="t" style="left:225.40px;top:407.28px;font-size:9.86px;line-height:12px;color:#242428;">platform</span>
<span class="t" style="left:482.00px;top:407.28px;font-size:9.86px;line-height:12px;color:#242428;">700 drwx------</span>
<span class="t" style="left:576.00px;top:407.28px;font-size:9.86px;line-height:12px;color:#242428;">1000 / servers</span>
<span class="t" style="left:689.50px;top:407.28px;font-size:9.86px;line-height:12px;color:#242428;">23:10 - 18 Июл</span>
<div class="r" style="left:803.90px;top:407.78px;width:13.30px;height:11.00px;background:#7199ba;box-shadow:inset 0 0 0 1px rgba(0,0,0,.07);"></div>
<svg class="ic" style="left:807.10px;top:409.98px;width:6.80px;height:6.80px;color:#fff;" viewBox="0 0 12 12" preserveAspectRatio="none" fill="currentColor"><path d="M8.700.5c.6-.6 1.500-.6 2.100 0l.7.7c.6.6.6 1.500 0 2.100l-.8.800-2.800-2.800zM7.100 2.100l2.800 2.800-6 6-3.600.8.800-3.600z"/></svg>
<div class="r" style="left:833.00px;top:407.78px;width:14.80px;height:11.00px;background:#7199ba;box-shadow:inset 0 0 0 1px rgba(0,0,0,.07);"></div>
<svg class="ic" style="left:836.80px;top:410.38px;width:7.40px;height:5.80px;color:#fff;" viewBox="0 0 14 12" preserveAspectRatio="none" fill="currentColor"><path fill-rule="evenodd" d="M4.600 0a4.600 4.600 0 0 1 4.500 5.600l4.900 3.900v2.300h-2.400v-1.500H10V8.800H8.300L7.400 8.100A4.600 4.600 0 1 1 4.600 0zM3.700 1.700a2 2 0 1 0 0 4 2 2 0 0 0 0-4z"/></svg>
<div class="r" style="left:863.20px;top:407.78px;width:13.60px;height:11.00px;background:#cc868b;box-shadow:inset 0 0 0 1px rgba(0,0,0,.07);"></div>
<svg class="ic" style="left:867.20px;top:411.08px;width:5.60px;height:4.80px;color:#fff;" viewBox="0 0 10 9" preserveAspectRatio="none" fill="currentColor"><path d="M2.400 0L5 2.300 7.600 0 10 2.100 7.400 4.500 10 6.900 7.600 9 5 6.700 2.400 9 0 6.900 2.600 4.500 0 2.100z"/></svg>
<div class="r" style="left:210.10px;top:422.15px;width:670.20px;height:18.34px;background:#f9f9f9;border-top:1px solid #e4e4e4;"></div>
<svg class="ic" style="left:213.30px;top:428.32px;width:9.00px;height:6.60px;color:#151515;" viewBox="0 0 14 10" preserveAspectRatio="none" fill="currentColor"><path d="M0 1.300A1.300 1.300 0 0 1 1.300 0h3.400A1.300 1.300 0 0 1 6 1.300v.3h6.700A1.300 1.300 0 0 1 14 2.900v5.800A1.300 1.300 0 0 1 12.700 10H1.300A1.300 1.300 0 0 1 0 8.700z"/></svg>
<span class="t" style="left:225.40px;top:425.62px;font-size:9.86px;line-height:12px;color:#242428;">steamapps</span>
<span class="t" style="left:482.00px;top:425.62px;font-size:9.86px;line-height:12px;color:#242428;">700 drwx------</span>
<span class="t" style="left:576.00px;top:425.62px;font-size:9.86px;line-height:12px;color:#242428;">1000 / servers</span>
<span class="t" style="left:689.50px;top:425.62px;font-size:9.86px;line-height:12px;color:#242428;">02:31 - 7 Июл</span>
<div class="r" style="left:803.90px;top:426.12px;width:13.30px;height:11.00px;background:#7199ba;box-shadow:inset 0 0 0 1px rgba(0,0,0,.07);"></div>
<svg class="ic" style="left:807.10px;top:428.32px;width:6.80px;height:6.80px;color:#fff;" viewBox="0 0 12 12" preserveAspectRatio="none" fill="currentColor"><path d="M8.700.5c.6-.6 1.500-.6 2.100 0l.7.7c.6.6.6 1.500 0 2.100l-.8.800-2.800-2.800zM7.100 2.100l2.800 2.800-6 6-3.600.8.800-3.600z"/></svg>
<div class="r" style="left:833.00px;top:426.12px;width:14.80px;height:11.00px;background:#7199ba;box-shadow:inset 0 0 0 1px rgba(0,0,0,.07);"></div>
<svg class="ic" style="left:836.80px;top:428.72px;width:7.40px;height:5.80px;color:#fff;" viewBox="0 0 14 12" preserveAspectRatio="none" fill="currentColor"><path fill-rule="evenodd" d="M4.600 0a4.600 4.600 0 0 1 4.500 5.600l4.900 3.900v2.300h-2.400v-1.500H10V8.800H8.300L7.400 8.100A4.600 4.600 0 1 1 4.600 0zM3.700 1.700a2 2 0 1 0 0 4 2 2 0 0 0 0-4z"/></svg>
<div class="r" style="left:863.20px;top:426.12px;width:13.60px;height:11.00px;background:#cc868b;box-shadow:inset 0 0 0 1px rgba(0,0,0,.07);"></div>
<svg class="ic" style="left:867.20px;top:429.42px;width:5.60px;height:4.80px;color:#fff;" viewBox="0 0 10 9" preserveAspectRatio="none" fill="currentColor"><path d="M2.400 0L5 2.300 7.600 0 10 2.100 7.400 4.500 10 6.900 7.600 9 5 6.700 2.400 9 0 6.900 2.600 4.500 0 2.100z"/></svg>
<div class="r" style="left:210.10px;top:440.49px;width:670.20px;height:18.34px;background:#fff;border-top:1px solid #e4e4e4;"></div>
<svg class="ic" style="left:213.30px;top:445.36px;width:8.20px;height:9.00px;color:#111;" viewBox="0 0 10 12" preserveAspectRatio="none" fill="currentColor"><path d="M.8 0h4.700v3.700c0 .4.400.8.800.8H10v6.700c0 .4-.4.800-.8.800H.8c-.4 0-.8-.4-.8-.8V.8C0 .4.400 0 .8 0z"/><path d="M6.500 0c.3.100.6.300.8.500l2.200 2.200c.2.200.4.500.5.800H6.500z"/></svg>
<span class="t" style="left:224.50px;top:443.96px;font-size:9.86px;line-height:12px;color:#242428;">chrome.pak</span>
<span class="t" style="left:414.50px;top:443.96px;font-size:9.86px;line-height:12px;color:#242428;">2.39 Мб</span>
<span class="t" style="left:482.00px;top:443.96px;font-size:9.86px;line-height:12px;color:#242428;">600 -rw-------</span>
<span class="t" style="left:576.00px;top:443.96px;font-size:9.86px;line-height:12px;color:#242428;">1000 / servers</span>
<span class="t" style="left:689.50px;top:443.96px;font-size:9.86px;line-height:12px;color:#242428;">10:38 - 3 Июн</span>
<div class="r" style="left:803.90px;top:444.46px;width:13.30px;height:11.00px;background:#7199ba;box-shadow:inset 0 0 0 1px rgba(0,0,0,.07);"></div>
<svg class="ic" style="left:807.10px;top:446.66px;width:6.80px;height:6.80px;color:#fff;" viewBox="0 0 12 12" preserveAspectRatio="none" fill="currentColor"><path d="M8.700.5c.6-.6 1.500-.6 2.100 0l.7.7c.6.6.6 1.500 0 2.100l-.8.800-2.800-2.800zM7.100 2.100l2.800 2.800-6 6-3.600.8.800-3.600z"/></svg>
<div class="r" style="left:833.00px;top:444.46px;width:14.80px;height:11.00px;background:#7199ba;box-shadow:inset 0 0 0 1px rgba(0,0,0,.07);"></div>
<svg class="ic" style="left:836.80px;top:447.06px;width:7.40px;height:5.80px;color:#fff;" viewBox="0 0 14 12" preserveAspectRatio="none" fill="currentColor"><path fill-rule="evenodd" d="M4.600 0a4.600 4.600 0 0 1 4.500 5.600l4.900 3.900v2.300h-2.400v-1.500H10V8.800H8.300L7.400 8.100A4.600 4.600 0 1 1 4.600 0zM3.700 1.700a2 2 0 1 0 0 4 2 2 0 0 0 0-4z"/></svg>
<div class="r" style="left:863.20px;top:444.46px;width:13.60px;height:11.00px;background:#cc868b;box-shadow:inset 0 0 0 1px rgba(0,0,0,.07);"></div>
<svg class="ic" style="left:867.20px;top:447.76px;width:5.60px;height:4.80px;color:#fff;" viewBox="0 0 10 9" preserveAspectRatio="none" fill="currentColor"><path d="M2.400 0L5 2.300 7.600 0 10 2.100 7.400 4.500 10 6.900 7.600 9 5 6.700 2.400 9 0 6.900 2.600 4.500 0 2.100z"/></svg>
<div class="r" style="left:210.10px;top:458.83px;width:670.20px;height:18.34px;background:#f9f9f9;border-top:1px solid #e4e4e4;"></div>
<svg class="ic" style="left:213.30px;top:463.70px;width:8.20px;height:9.00px;color:#111;" viewBox="0 0 10 12" preserveAspectRatio="none" fill="currentColor"><path fill-rule="evenodd" d="M.8 0h4.700v3.700c0 .4.400.8.800.8H10v6.700c0 .4-.4.800-.8.800H.8c-.4 0-.8-.4-.8-.8V.8C0 .4.400 0 .8 0zM2.300 5.400v.9h5.400v-.9zM2.300 7.300v.9h5.400v-.9zM2.300 9.200v.9h5.400v-.9z"/><path d="M6.500 0c.3.100.6.300.8.500l2.200 2.200c.2.200.4.500.5.800H6.500z"/></svg>
<span class="t" style="left:224.50px;top:462.30px;font-size:9.86px;line-height:12px;color:#242428;">debug.log</span>
<span class="t" style="left:414.50px;top:462.30px;font-size:9.86px;line-height:12px;color:#242428;">2.09 Кб</span>
<span class="t" style="left:482.00px;top:462.30px;font-size:9.86px;line-height:12px;color:#242428;">600 -rw-------</span>
<span class="t" style="left:576.00px;top:462.30px;font-size:9.86px;line-height:12px;color:#242428;">1000 / servers</span>
<span class="t" style="left:689.50px;top:462.30px;font-size:9.86px;line-height:12px;color:#242428;">09:04 - 8 Июн</span>
<div class="r" style="left:803.90px;top:462.80px;width:13.30px;height:11.00px;background:#7199ba;box-shadow:inset 0 0 0 1px rgba(0,0,0,.07);"></div>
<svg class="ic" style="left:807.10px;top:465.00px;width:6.80px;height:6.80px;color:#fff;" viewBox="0 0 12 12" preserveAspectRatio="none" fill="currentColor"><path d="M8.700.5c.6-.6 1.500-.6 2.100 0l.7.7c.6.6.6 1.500 0 2.100l-.8.800-2.800-2.800zM7.100 2.100l2.800 2.800-6 6-3.600.8.800-3.600z"/></svg>
<div class="r" style="left:833.00px;top:462.80px;width:14.80px;height:11.00px;background:#7199ba;box-shadow:inset 0 0 0 1px rgba(0,0,0,.07);"></div>
<svg class="ic" style="left:836.80px;top:465.40px;width:7.40px;height:5.80px;color:#fff;" viewBox="0 0 14 12" preserveAspectRatio="none" fill="currentColor"><path fill-rule="evenodd" d="M4.600 0a4.600 4.600 0 0 1 4.500 5.600l4.900 3.900v2.300h-2.400v-1.500H10V8.800H8.300L7.400 8.100A4.600 4.600 0 1 1 4.600 0zM3.700 1.700a2 2 0 1 0 0 4 2 2 0 0 0 0-4z"/></svg>
<div class="r" style="left:863.20px;top:462.80px;width:13.60px;height:11.00px;background:#cc868b;box-shadow:inset 0 0 0 1px rgba(0,0,0,.07);"></div>
<svg class="ic" style="left:867.20px;top:466.10px;width:5.60px;height:4.80px;color:#fff;" viewBox="0 0 10 9" preserveAspectRatio="none" fill="currentColor"><path d="M2.400 0L5 2.300 7.600 0 10 2.100 7.400 4.500 10 6.900 7.600 9 5 6.700 2.400 9 0 6.900 2.600 4.500 0 2.100z"/></svg>
<div class="r" style="left:210.10px;top:477.17px;width:670.20px;height:18.34px;background:#fff;border-top:1px solid #e4e4e4;"></div>
<svg class="ic" style="left:213.30px;top:482.04px;width:8.20px;height:9.00px;color:#111;" viewBox="0 0 10 12" preserveAspectRatio="none" fill="currentColor"><path d="M.8 0h4.700v3.700c0 .4.400.8.800.8H10v6.700c0 .4-.4.800-.8.800H.8c-.4 0-.8-.4-.8-.8V.8C0 .4.400 0 .8 0z"/><path d="M6.500 0c.3.100.6.300.8.500l2.200 2.200c.2.200.4.500.5.800H6.500z"/></svg>
<span class="t" style="left:224.50px;top:480.64px;font-size:9.86px;line-height:12px;color:#242428;">srcds.exe</span>
<span class="t" style="left:414.50px;top:480.64px;font-size:9.86px;line-height:12px;color:#242428;">403.23 Кб</span>
<span class="t" style="left:482.00px;top:480.64px;font-size:9.86px;line-height:12px;color:#242428;">600 -rw-------</span>
<span class="t" style="left:576.00px;top:480.64px;font-size:9.86px;line-height:12px;color:#242428;">1000 / servers</span>
<span class="t" style="left:689.50px;top:480.64px;font-size:9.86px;line-height:12px;color:#242428;">02:31 - 7 Июл</span>
<div class="r" style="left:803.90px;top:481.14px;width:13.30px;height:11.00px;background:#7199ba;box-shadow:inset 0 0 0 1px rgba(0,0,0,.07);"></div>
<svg class="ic" style="left:807.10px;top:483.34px;width:6.80px;height:6.80px;color:#fff;" viewBox="0 0 12 12" preserveAspectRatio="none" fill="currentColor"><path d="M8.700.5c.6-.6 1.500-.6 2.100 0l.7.7c.6.6.6 1.500 0 2.100l-.8.800-2.800-2.800zM7.100 2.100l2.800 2.800-6 6-3.600.8.800-3.600z"/></svg>
<div class="r" style="left:833.00px;top:481.14px;width:14.80px;height:11.00px;background:#7199ba;box-shadow:inset 0 0 0 1px rgba(0,0,0,.07);"></div>
<svg class="ic" style="left:836.80px;top:483.74px;width:7.40px;height:5.80px;color:#fff;" viewBox="0 0 14 12" preserveAspectRatio="none" fill="currentColor"><path fill-rule="evenodd" d="M4.600 0a4.600 4.600 0 0 1 4.500 5.600l4.900 3.900v2.300h-2.400v-1.500H10V8.800H8.300L7.400 8.100A4.600 4.600 0 1 1 4.600 0zM3.700 1.700a2 2 0 1 0 0 4 2 2 0 0 0 0-4z"/></svg>
<div class="r" style="left:863.20px;top:481.14px;width:13.60px;height:11.00px;background:#cc868b;box-shadow:inset 0 0 0 1px rgba(0,0,0,.07);"></div>
<svg class="ic" style="left:867.20px;top:484.44px;width:5.60px;height:4.80px;color:#fff;" viewBox="0 0 10 9" preserveAspectRatio="none" fill="currentColor"><path d="M2.400 0L5 2.300 7.600 0 10 2.100 7.400 4.500 10 6.900 7.600 9 5 6.700 2.400 9 0 6.900 2.600 4.500 0 2.100z"/></svg>
<div class="r" style="left:210.10px;top:495.51px;width:670.20px;height:18.34px;background:#f9f9f9;border-top:1px solid #e4e4e4;"></div>
<svg class="ic" style="left:213.30px;top:500.38px;width:8.20px;height:9.00px;color:#111;" viewBox="0 0 10 12" preserveAspectRatio="none" fill="currentColor"><path d="M.8 0h4.700v3.700c0 .4.400.8.800.8H10v6.700c0 .4-.4.800-.8.800H.8c-.4 0-.8-.4-.8-.8V.8C0 .4.400 0 .8 0z"/><path d="M6.500 0c.3.100.6.300.8.500l2.200 2.200c.2.200.4.500.5.800H6.500z"/></svg>
<span class="t" style="left:224.50px;top:498.98px;font-size:9.86px;line-height:12px;color:#242428;">srcds_linux</span>
<span class="t" style="left:414.50px;top:498.98px;font-size:9.86px;line-height:12px;color:#242428;">6.2 Кб</span>
<span class="t" style="left:482.00px;top:498.98px;font-size:9.86px;line-height:12px;color:#242428;">500 -r-x------</span>
<span class="t" style="left:576.00px;top:498.98px;font-size:9.86px;line-height:12px;color:#242428;">1000 / servers</span>
<span class="t" style="left:689.50px;top:498.98px;font-size:9.86px;line-height:12px;color:#242428;">11:05 - 3 Июн</span>
<div class="r" style="left:803.90px;top:499.48px;width:13.30px;height:11.00px;background:#7199ba;box-shadow:inset 0 0 0 1px rgba(0,0,0,.07);"></div>
<svg class="ic" style="left:807.10px;top:501.68px;width:6.80px;height:6.80px;color:#fff;" viewBox="0 0 12 12" preserveAspectRatio="none" fill="currentColor"><path d="M8.700.5c.6-.6 1.500-.6 2.100 0l.7.7c.6.6.6 1.500 0 2.100l-.8.800-2.800-2.800zM7.100 2.100l2.800 2.800-6 6-3.600.8.800-3.600z"/></svg>
<div class="r" style="left:833.00px;top:499.48px;width:14.80px;height:11.00px;background:#7199ba;box-shadow:inset 0 0 0 1px rgba(0,0,0,.07);"></div>
<svg class="ic" style="left:836.80px;top:502.08px;width:7.40px;height:5.80px;color:#fff;" viewBox="0 0 14 12" preserveAspectRatio="none" fill="currentColor"><path fill-rule="evenodd" d="M4.600 0a4.600 4.600 0 0 1 4.500 5.600l4.900 3.900v2.300h-2.400v-1.500H10V8.800H8.300L7.400 8.100A4.600 4.600 0 1 1 4.600 0zM3.700 1.700a2 2 0 1 0 0 4 2 2 0 0 0 0-4z"/></svg>
<div class="r" style="left:863.20px;top:499.48px;width:13.60px;height:11.00px;background:#cc868b;box-shadow:inset 0 0 0 1px rgba(0,0,0,.07);"></div>
<svg class="ic" style="left:867.20px;top:502.78px;width:5.60px;height:4.80px;color:#fff;" viewBox="0 0 10 9" preserveAspectRatio="none" fill="currentColor"><path d="M2.400 0L5 2.300 7.600 0 10 2.100 7.400 4.500 10 6.900 7.600 9 5 6.700 2.400 9 0 6.900 2.600 4.500 0 2.100z"/></svg>
<div class="r" style="left:210.10px;top:513.85px;width:670.20px;height:18.34px;background:#fff;border-top:1px solid #e4e4e4;"></div>
<svg class="ic" style="left:213.30px;top:518.72px;width:8.20px;height:9.00px;color:#111;" viewBox="0 0 10 12" preserveAspectRatio="none" fill="currentColor"><path d="M.8 0h4.700v3.700c0 .4.400.8.800.8H10v6.700c0 .4-.4.800-.8.800H.8c-.4 0-.8-.4-.8-.8V.8C0 .4.400 0 .8 0z"/><path d="M6.500 0c.3.100.6.300.8.500l2.200 2.200c.2.200.4.500.5.800H6.500z"/></svg>
<span class="t" style="left:224.50px;top:517.32px;font-size:9.86px;line-height:12px;color:#242428;">srcds_run</span>
<span class="t" style="left:414.50px;top:517.32px;font-size:9.86px;line-height:12px;color:#242428;">9.61 Кб</span>
<span class="t" style="left:482.00px;top:517.32px;font-size:9.86px;line-height:12px;color:#242428;">500 -r-x------</span>
<span class="t" style="left:576.00px;top:517.32px;font-size:9.86px;line-height:12px;color:#242428;">1000 / servers</span>
<span class="t" style="left:689.50px;top:517.32px;font-size:9.86px;line-height:12px;color:#242428;">11:06 - 3 Июн</span>
<div class="r" style="left:803.90px;top:517.82px;width:13.30px;height:11.00px;background:#7199ba;box-shadow:inset 0 0 0 1px rgba(0,0,0,.07);"></div>
<svg class="ic" style="left:807.10px;top:520.02px;width:6.80px;height:6.80px;color:#fff;" viewBox="0 0 12 12" preserveAspectRatio="none" fill="currentColor"><path d="M8.700.5c.6-.6 1.500-.6 2.100 0l.7.7c.6.6.6 1.500 0 2.100l-.8.800-2.800-2.800zM7.100 2.100l2.800 2.800-6 6-3.600.8.800-3.600z"/></svg>
<div class="r" style="left:833.00px;top:517.82px;width:14.80px;height:11.00px;background:#7199ba;box-shadow:inset 0 0 0 1px rgba(0,0,0,.07);"></div>
<svg class="ic" style="left:836.80px;top:520.42px;width:7.40px;height:5.80px;color:#fff;" viewBox="0 0 14 12" preserveAspectRatio="none" fill="currentColor"><path fill-rule="evenodd" d="M4.600 0a4.600 4.600 0 0 1 4.500 5.600l4.900 3.900v2.300h-2.400v-1.500H10V8.800H8.300L7.400 8.100A4.600 4.600 0 1 1 4.600 0zM3.700 1.700a2 2 0 1 0 0 4 2 2 0 0 0 0-4z"/></svg>
<div class="r" style="left:863.20px;top:517.82px;width:13.60px;height:11.00px;background:#cc868b;box-shadow:inset 0 0 0 1px rgba(0,0,0,.07);"></div>
<svg class="ic" style="left:867.20px;top:521.12px;width:5.60px;height:4.80px;color:#fff;" viewBox="0 0 10 9" preserveAspectRatio="none" fill="currentColor"><path d="M2.400 0L5 2.300 7.600 0 10 2.100 7.400 4.500 10 6.900 7.600 9 5 6.700 2.400 9 0 6.900 2.600 4.500 0 2.100z"/></svg>
<div class="r" style="left:210.10px;top:532.19px;width:670.20px;height:18.34px;background:#f9f9f9;border-top:1px solid #e4e4e4;"></div>
<svg class="ic" style="left:213.30px;top:537.06px;width:8.20px;height:9.00px;color:#111;" viewBox="0 0 10 12" preserveAspectRatio="none" fill="currentColor"><path fill-rule="evenodd" d="M.8 0h4.700v3.700c0 .4.400.8.800.8H10v6.700c0 .4-.4.800-.8.800H.8c-.4 0-.8-.4-.8-.8V.8C0 .4.400 0 .8 0zM2.300 5.400v.9h5.400v-.9zM2.300 7.300v.9h5.400v-.9zM2.300 9.200v.9h5.400v-.9z"/><path d="M6.500 0c.3.100.6.300.8.500l2.200 2.200c.2.200.4.500.5.800H6.500z"/></svg>
<span class="t" style="left:224.50px;top:535.66px;font-size:9.86px;line-height:12px;color:#242428;">steam_appid.txt</span>
<span class="t" style="left:414.50px;top:535.66px;font-size:9.86px;line-height:12px;color:#242428;">5 Байт</span>
<span class="t" style="left:482.00px;top:535.66px;font-size:9.86px;line-height:12px;color:#242428;">600 -rw-------</span>
<span class="t" style="left:576.00px;top:535.66px;font-size:9.86px;line-height:12px;color:#242428;">1000 / servers</span>
<span class="t" style="left:689.50px;top:535.66px;font-size:9.86px;line-height:12px;color:#242428;">02:33 - 7 Июл</span>
<div class="r" style="left:803.90px;top:536.16px;width:13.30px;height:11.00px;background:#7199ba;box-shadow:inset 0 0 0 1px rgba(0,0,0,.07);"></div>
<svg class="ic" style="left:807.10px;top:538.36px;width:6.80px;height:6.80px;color:#fff;" viewBox="0 0 12 12" preserveAspectRatio="none" fill="currentColor"><path d="M8.700.5c.6-.6 1.500-.6 2.100 0l.7.7c.6.6.6 1.500 0 2.100l-.8.800-2.800-2.800zM7.100 2.100l2.800 2.800-6 6-3.600.8.800-3.600z"/></svg>
<div class="r" style="left:833.00px;top:536.16px;width:14.80px;height:11.00px;background:#7199ba;box-shadow:inset 0 0 0 1px rgba(0,0,0,.07);"></div>
<svg class="ic" style="left:836.80px;top:538.76px;width:7.40px;height:5.80px;color:#fff;" viewBox="0 0 14 12" preserveAspectRatio="none" fill="currentColor"><path fill-rule="evenodd" d="M4.600 0a4.600 4.600 0 0 1 4.500 5.600l4.900 3.900v2.300h-2.400v-1.500H10V8.800H8.300L7.400 8.100A4.600 4.600 0 1 1 4.600 0zM3.700 1.700a2 2 0 1 0 0 4 2 2 0 0 0 0-4z"/></svg>
<div class="r" style="left:863.20px;top:536.16px;width:13.60px;height:11.00px;background:#cc868b;box-shadow:inset 0 0 0 1px rgba(0,0,0,.07);"></div>
<svg class="ic" style="left:867.20px;top:539.46px;width:5.60px;height:4.80px;color:#fff;" viewBox="0 0 10 9" preserveAspectRatio="none" fill="currentColor"><path d="M2.400 0L5 2.300 7.600 0 10 2.100 7.400 4.500 10 6.900 7.600 9 5 6.700 2.400 9 0 6.900 2.600 4.500 0 2.100z"/></svg>
<div class="r" style="left:210.10px;top:550.53px;width:670.20px;height:18.34px;background:#fff;border-top:1px solid #e4e4e4;"></div>
<svg class="ic" style="left:213.30px;top:555.40px;width:8.20px;height:9.00px;color:#111;" viewBox="0 0 10 12" preserveAspectRatio="none" fill="currentColor"><path d="M.8 0h4.700v3.700c0 .4.400.8.800.8H10v6.700c0 .4-.4.800-.8.800H.8c-.4 0-.8-.4-.8-.8V.8C0 .4.400 0 .8 0z"/><path d="M6.500 0c.3.100.6.300.8.500l2.200 2.200c.2.200.4.500.5.800H6.500z"/></svg>
<span class="t" style="left:224.50px;top:554.00px;font-size:9.86px;line-height:12px;color:#242428;">thirdpartylegalnotices.doc</span>
<span class="t" style="left:414.50px;top:554.00px;font-size:9.86px;line-height:12px;color:#242428;">354 Кб</span>
<span class="t" style="left:482.00px;top:554.00px;font-size:9.86px;line-height:12px;color:#242428;">600 -rw-------</span>
<span class="t" style="left:576.00px;top:554.00px;font-size:9.86px;line-height:12px;color:#242428;">1000 / servers</span>
<span class="t" style="left:689.50px;top:554.00px;font-size:9.86px;line-height:12px;color:#242428;">10:54 - 3 Июн</span>
<div class="r" style="left:803.90px;top:554.50px;width:13.30px;height:11.00px;background:#7199ba;box-shadow:inset 0 0 0 1px rgba(0,0,0,.07);"></div>
<svg class="ic" style="left:807.10px;top:556.70px;width:6.80px;height:6.80px;color:#fff;" viewBox="0 0 12 12" preserveAspectRatio="none" fill="currentColor"><path d="M8.700.5c.6-.6 1.500-.6 2.100 0l.7.7c.6.6.6 1.500 0 2.100l-.8.800-2.800-2.800zM7.100 2.100l2.800 2.800-6 6-3.600.8.800-3.600z"/></svg>
<div class="r" style="left:833.00px;top:554.50px;width:14.80px;height:11.00px;background:#7199ba;box-shadow:inset 0 0 0 1px rgba(0,0,0,.07);"></div>
<svg class="ic" style="left:836.80px;top:557.10px;width:7.40px;height:5.80px;color:#fff;" viewBox="0 0 14 12" preserveAspectRatio="none" fill="currentColor"><path fill-rule="evenodd" d="M4.600 0a4.600 4.600 0 0 1 4.500 5.600l4.900 3.900v2.300h-2.400v-1.500H10V8.800H8.300L7.400 8.100A4.600 4.600 0 1 1 4.600 0zM3.700 1.700a2 2 0 1 0 0 4 2 2 0 0 0 0-4z"/></svg>
<div class="r" style="left:863.20px;top:554.50px;width:13.60px;height:11.00px;background:#cc868b;box-shadow:inset 0 0 0 1px rgba(0,0,0,.07);"></div>
<svg class="ic" style="left:867.20px;top:557.80px;width:5.60px;height:4.80px;color:#fff;" viewBox="0 0 10 9" preserveAspectRatio="none" fill="currentColor"><path d="M2.400 0L5 2.300 7.600 0 10 2.100 7.400 4.500 10 6.900 7.600 9 5 6.700 2.400 9 0 6.900 2.600 4.500 0 2.100z"/></svg>
<div class="r" style="left:210.10px;top:568.87px;width:670.20px;height:1.00px;background:#ececec;"></div>
</section>
</main>
<div class="r" style="left:0.00px;top:618.00px;width:956.00px;height:1.00px;background:#f0f5f8;"></div>
<div class="r" style="left:55.00px;top:422.00px;width:155.00px;height:1.00px;background:rgba(0,0,0,0.105);"></div>
<div class="r" style="left:210.00px;top:422.00px;width:681.00px;height:1.00px;background:rgba(0,0,0,0.035);"></div>
<div class="r" style="left:891.00px;top:422.00px;width:13.00px;height:1.00px;background:rgba(0,0,0,0.105);"></div>
</body>
</html>
